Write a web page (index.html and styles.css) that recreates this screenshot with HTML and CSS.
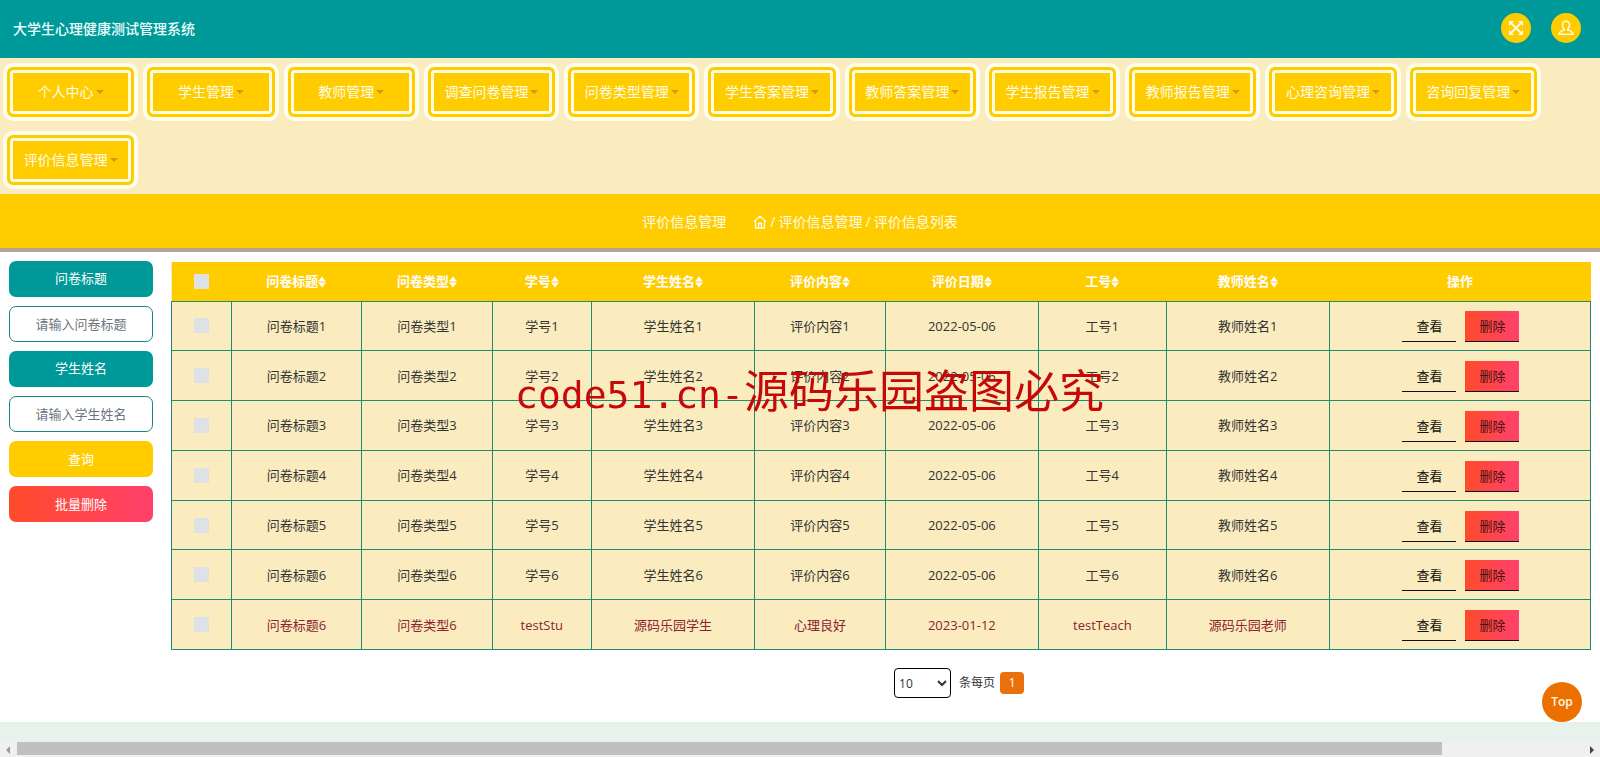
FILE: index.html
```html
<!DOCTYPE html>
<html lang="zh-CN">
<head>
<meta charset="utf-8">
<title>大学生心理健康测试管理系统</title>
<link rel="stylesheet" href="styles.css">
</head>
<body>
<svg class="defs" aria-hidden="true">
  <symbol id="sort" viewBox="0 0 8 12"><path d="M4 .5 8 5.500H0zM4 11.500 0 6.500h8z" fill="currentColor"/></symbol>
</svg>
<header class="topbar">
  <h1 class="title">大学生心理健康测试管理系统</h1>
  <div class="tools">
    <button class="tool" type="button" aria-label="全屏">
      <svg width="16" height="16" viewBox="0 0 16 16" fill="none" stroke="currentColor" stroke-width="2"><path d="M3 3l10 10M13 3L3 13"/><path d="M1 1h5L1 6zM15 1v5l-5-5zM1 15v-5l5 5zM15 15h-5l5-5z" fill="currentColor" stroke="none"/></svg>
    </button>
    <button class="tool" type="button" aria-label="用户">
      <svg width="16" height="16" viewBox="0 0 16 16" fill="none" stroke="currentColor" stroke-width="1.500"><path d="M8 1.200c-2.200 0-3.500 1.500-3.500 3.800 0 1.800.7 3.200 1.800 4v1C3.500 10.500 1.500 11.500 1 14.300h14c-.5-2.800-2.500-3.800-5.300-4.300V9c1.100-.8 1.800-2.200 1.800-4 0-2.300-1.300-3.800-3.500-3.800z"/></svg>
    </button>
  </div>
</header>
<nav class="menu">
  <div class="menu-item"><button class="menu-btn" type="button">个人中心</button></div>
  <div class="menu-item"><button class="menu-btn" type="button">学生管理</button></div>
  <div class="menu-item"><button class="menu-btn" type="button">教师管理</button></div>
  <div class="menu-item"><button class="menu-btn" type="button">调查问卷管理</button></div>
  <div class="menu-item"><button class="menu-btn" type="button">问卷类型管理</button></div>
  <div class="menu-item"><button class="menu-btn" type="button">学生答案管理</button></div>
  <div class="menu-item"><button class="menu-btn" type="button">教师答案管理</button></div>
  <div class="menu-item"><button class="menu-btn" type="button">学生报告管理</button></div>
  <div class="menu-item"><button class="menu-btn" type="button">教师报告管理</button></div>
  <div class="menu-item"><button class="menu-btn" type="button">心理咨询管理</button></div>
  <div class="menu-item"><button class="menu-btn" type="button">咨询回复管理</button></div>
  <div class="menu-item"><button class="menu-btn" type="button">评价信息管理</button></div>
</nav>
<div class="crumbs">
  <span>评价信息管理</span>
  <div class="trail">
    <a href="#" aria-label="首页"><svg width="14" height="14" viewBox="0 0 14 14" fill="none" stroke="currentColor" stroke-width="1.300"><path d="M1 6.800 7 1.200l6 5.600M2.500 6v7h9V6M5.500 13V8.500h3V13"/></svg></a>
    <span>/</span><span>评价信息管理</span><span>/</span><span>评价信息列表</span>
  </div>
</div>
<main class="main">
  <form class="filters">
    <label class="field label" for="paper">问卷标题</label>
    <input class="field input" id="paper" type="text" placeholder="请输入问卷标题">
    <label class="field label" for="student">学生姓名</label>
    <input class="field input" id="student" type="text" placeholder="请输入学生姓名">
    <button class="field search" type="button">查询</button>
    <button class="field remove" type="button">批量删除</button>
  </form>
  <section class="content">
    <table class="grid">
      <colgroup><col class="c-check"><col class="c-mid"><col class="c-mid"><col class="c-no"><col class="c-name"><col class="c-mid"><col class="c-date"><col class="c-job"><col class="c-name"><col class="c-act"></colgroup>
      <thead>
        <tr>
          <th><input class="check" type="checkbox" aria-label="全选"></th>
          <th>问卷标题<svg class="sort"><use href="#sort"/></svg></th>
          <th>问卷类型<svg class="sort"><use href="#sort"/></svg></th>
          <th>学号<svg class="sort"><use href="#sort"/></svg></th>
          <th>学生姓名<svg class="sort"><use href="#sort"/></svg></th>
          <th>评价内容<svg class="sort"><use href="#sort"/></svg></th>
          <th>评价日期<svg class="sort"><use href="#sort"/></svg></th>
          <th>工号<svg class="sort"><use href="#sort"/></svg></th>
          <th>教师姓名<svg class="sort"><use href="#sort"/></svg></th>
          <th>操作</th>
        </tr>
      </thead>
      <tbody>
        <tr><td><input class="check" type="checkbox" aria-label="选择第1行"></td><td>问卷标题1</td><td>问卷类型1</td><td>学号1</td><td>学生姓名1</td><td>评价内容1</td><td>2022-05-06</td><td>工号1</td><td>教师姓名1</td><td><div class="acts"><button class="act" type="button">查看</button><button class="act del" type="button">删除</button></div></td></tr>
        <tr><td><input class="check" type="checkbox" aria-label="选择第2行"></td><td>问卷标题2</td><td>问卷类型2</td><td>学号2</td><td>学生姓名2</td><td>评价内容2</td><td>2022-05-06</td><td>工号2</td><td>教师姓名2</td><td><div class="acts"><button class="act" type="button">查看</button><button class="act del" type="button">删除</button></div></td></tr>
        <tr><td><input class="check" type="checkbox" aria-label="选择第3行"></td><td>问卷标题3</td><td>问卷类型3</td><td>学号3</td><td>学生姓名3</td><td>评价内容3</td><td>2022-05-06</td><td>工号3</td><td>教师姓名3</td><td><div class="acts"><button class="act" type="button">查看</button><button class="act del" type="button">删除</button></div></td></tr>
        <tr><td><input class="check" type="checkbox" aria-label="选择第4行"></td><td>问卷标题4</td><td>问卷类型4</td><td>学号4</td><td>学生姓名4</td><td>评价内容4</td><td>2022-05-06</td><td>工号4</td><td>教师姓名4</td><td><div class="acts"><button class="act" type="button">查看</button><button class="act del" type="button">删除</button></div></td></tr>
        <tr><td><input class="check" type="checkbox" aria-label="选择第5行"></td><td>问卷标题5</td><td>问卷类型5</td><td>学号5</td><td>学生姓名5</td><td>评价内容5</td><td>2022-05-06</td><td>工号5</td><td>教师姓名5</td><td><div class="acts"><button class="act" type="button">查看</button><button class="act del" type="button">删除</button></div></td></tr>
        <tr><td><input class="check" type="checkbox" aria-label="选择第6行"></td><td>问卷标题6</td><td>问卷类型6</td><td>学号6</td><td>学生姓名6</td><td>评价内容6</td><td>2022-05-06</td><td>工号6</td><td>教师姓名6</td><td><div class="acts"><button class="act" type="button">查看</button><button class="act del" type="button">删除</button></div></td></tr>
        <tr class="active"><td><input class="check" type="checkbox" aria-label="选择第7行"></td><td>问卷标题6</td><td>问卷类型6</td><td>testStu</td><td>源码乐园学生</td><td>心理良好</td><td>2023-01-12</td><td>testTeach</td><td>源码乐园老师</td><td><div class="acts"><button class="act" type="button">查看</button><button class="act del" type="button">删除</button></div></td></tr>
      </tbody>
    </table>
    <div class="pager">
      <select class="size" id="size"><option>10</option><option>25</option><option>50</option></select>
      <label for="size">条每页</label>
      <button class="page" type="button">1</button>
    </div>
  </section>
</main>
<div class="scroll" aria-hidden="true">
  <span class="arrow left"></span>
  <div class="track"><div class="thumb"></div></div>
  <span class="arrow right"></span>
</div>
<a class="totop" href="#">Top</a>
<div class="watermark"><span class="latin">code51.cn-</span>源码乐园盗图必究</div>
</body>
</html>
```
FILE: styles.css
```css
* { box-sizing: border-box; }

body {
  margin: 0;
  min-height: 100vh;
  display: flex;
  flex-direction: column;
  background: #e7f2ec;
  color: #333;
  font: 13px/20px "Open Sans", "Noto Sans CJK SC", sans-serif;
}

button, input, select { font: inherit; }
button { cursor: pointer; }
.defs { position: absolute; width: 0; height: 0; }

.topbar {
  display: flex;
  align-items: center;
  justify-content: space-between;
  height: 58px;
  padding: 0 19px 0 13px;
  background: #099;
}
.title { margin: 0; font-size: 14px; font-weight: 500; color: #eff; }
.tools { display: flex; gap: 20px; padding-bottom: 3px; }
.tool {
  display: grid;
  place-items: center;
  width: 30px;
  height: 30px;
  padding: 0;
  border: 0;
  border-radius: 50%;
  background: #fc0;
  color: #fffbe0;
}

.menu {
  display: grid;
  grid-template-columns: repeat(11, 1fr);
  padding-right: 57px;
  background: #faecbe;
}
.menu-item { padding: 9px 6px 9px 7px; }
.menu-btn {
  display: flex;
  align-items: center;
  justify-content: center;
  gap: 2px;
  width: 100%;
  height: 50px;
  padding: 0;
  border: 3px solid #fc0;
  border-radius: 6px;
  background: #fc0;
  box-shadow: 0 0 0 4px #fffdec, inset 0 0 0 3px #fffce0;
  color: #fffde8;
  font-size: 14px;
  white-space: nowrap;
}
.menu-btn::after {
  content: "";
  border: 4px solid transparent;
  border-top-color: #cf9a10;
  border-bottom: 0;
}

.crumbs {
  display: flex;
  align-items: center;
  justify-content: center;
  gap: 27px;
  height: 58px;
  padding-top: 2px;
  border-bottom: 4px solid #b5a29c;
  background: #fc0;
  color: #fffde8;
  font-size: 14px;
}
.trail { display: flex; align-items: center; gap: 3px; }
.trail a { display: flex; color: inherit; }

.main {
  display: flex;
  gap: 18px;
  padding: 9px 9px 24px;
  background: #fff;
}
.filters { flex: 0 0 144px; display: flex; flex-direction: column; gap: 9px; }
.field {
  display: block;
  width: 100%;
  height: 36px;
  padding: 0;
  border: 0;
  border-radius: 7px;
  line-height: 34px;
  text-align: center;
  color: #fff;
}
.label { background: #099; }
.input { border: 1px solid #1a8585; background: #fff; color: #333; }
.input::placeholder { color: #6c757d; }
.search { background: #fc0; }
.remove { background: linear-gradient(90deg, #ff4b2b, #ff416c); }

.content { flex: 1; padding-top: 1px; }
.grid {
  width: 100%;
  height: 388px;
  table-layout: fixed;
  border-collapse: collapse;
  background: #faecbe;
  text-align: center;
}
.c-check { width: 4.2%; }
.c-mid { width: 9.2%; }
.c-no { width: 7%; }
.c-name { width: 11.5%; }
.c-date { width: 10.8%; }
.c-job { width: 9%; }
.c-act { width: 18.4%; }
.grid th { height: 39px; padding: 0; background: #fc0; color: #fff; font-weight: 700; }
.grid td { padding: 0; border: 1px solid #1f8d72; }
.active td { color: #8b2332; }
.sort { width: 8px; height: 12px; vertical-align: -2px; }
.check {
  appearance: none;
  display: block;
  width: 15px;
  height: 15px;
  margin: 0 auto;
  background: #dee2e6;
}
.acts { display: flex; justify-content: center; gap: 9px; padding: 2px 0 0 2px; }
.act {
  width: 54px;
  height: 31px;
  padding: 0;
  border: 0;
  border-bottom: 1px solid #111;
  background: transparent;
  color: #111;
}
.del { background: linear-gradient(90deg, #ff4b2b, #ff416c); color: #4a1010; }

.pager {
  display: flex;
  align-items: center;
  justify-content: center;
  padding: 18px 0 0 11%;
  font-size: 12px;
}
.size {
  width: 57px;
  height: 30px;
  margin-right: 8px;
  padding: 0;
  border: 1px solid #000;
  border-radius: 4px;
  background: #fff;
  color: #333;
}
.page {
  width: 24px;
  height: 22px;
  margin-left: 5px;
  padding: 0;
  border: 0;
  border-radius: 4px;
  background: #e9700a;
  color: #fff;
  line-height: 20px;
}

.scroll {
  display: flex;
  align-items: center;
  gap: 7px;
  height: 15px;
  margin-top: auto;
  padding: 0 6px;
  background: #f1f0f0;
}
.track { flex: 1; height: 100%; padding-bottom: 2px; }
.thumb { width: 91%; height: 100%; background: #c1bfbf; }
.arrow { border: 4px solid transparent; }
.left { border-left: 0; border-right-color: #999; }
.right { border-right: 0; border-left-color: #444; }

.totop {
  position: fixed;
  right: 18px;
  bottom: 35px;
  width: 40px;
  height: 40px;
  border-radius: 50%;
  background: #ec7000;
  color: #fffbe8;
  font-size: 12px;
  font-weight: 600;
  line-height: 40px;
  text-align: center;
  text-decoration: none;
}
.watermark {
  position: fixed;
  inset: 0 0 auto;
  padding: 362px 0 0 19px;
  color: #c60808;
  font: 45px/54px "Noto Sans CJK SC", sans-serif;
  text-align: center;
  pointer-events: none;
}
.latin { font-family: "DejaVu Sans Mono", monospace; font-size: 38px; }
```
